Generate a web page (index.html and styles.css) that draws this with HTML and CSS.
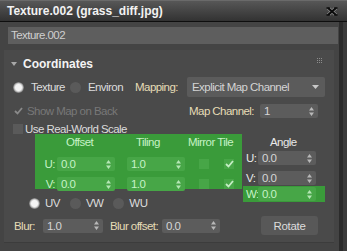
FILE: index.html
```html
<!DOCTYPE html>
<html lang="en">
<head>
  <meta charset="UTF-8">
  <title>Texture.002 (grass_diff.jpg)</title>
  <link rel="stylesheet" href="styles.css">
</head>
<body>
  <div class="titlebar">
    <span class="title">Texture.002 (grass_diff.jpg)</span>
    <svg class="close" width="12" height="9" viewBox="0 0 12 9">
      <path d="M2 1 L10 8 M10 1 L2 8" stroke="#8a8a8a" stroke-width="3.6"/>
      <path d="M2 1 L10 8 M10 1 L2 8" stroke="#0c0c0c" stroke-width="2.2"/>
      <path d="M0.5 1 H4 M8 1 H11.5 M0.5 8 H4 M8 8 H11.5" stroke="#0c0c0c" stroke-width="1.4"/>
    </svg>
  </div>
  <div class="body">
    <div class="main">
      <div class="namefield">Texture.002</div>
      <div class="rollout">
        <div class="head">
          <svg class="tri" width="6" height="4" viewBox="0 0 6 4"><path d="M0 0 H6 L3 4 Z" fill="#a8a8a8"/></svg>
          <span class="head-title">Coordinates</span>
          <svg class="grip" width="5" height="5" viewBox="0 0 5 5" fill="#8c8c8c">
            <rect x="0" y="0" width="1" height="1"/><rect x="2" y="0" width="1" height="1"/><rect x="4" y="0" width="1" height="1"/>
            <rect x="0" y="2" width="1" height="1"/><rect x="2" y="2" width="1" height="1"/><rect x="4" y="2" width="1" height="1"/>
            <rect x="0" y="4" width="1" height="1"/><rect x="2" y="4" width="1" height="1"/><rect x="4" y="4" width="1" height="1"/>
          </svg>
        </div>

        <div class="row row-map">
          <span class="radio on"></span><span class="opt">Texture</span>
          <span class="radio gap-l"></span><span class="opt">Environ</span>
          <span class="lbl mapping">Mapping:</span>
          <div class="dropdown">
            <span>Explicit Map Channel</span>
            <svg width="7" height="4" viewBox="0 0 7 4"><path d="M0 0 H7 L3.5 4 Z" fill="#c8c8c8"/></svg>
          </div>
        </div>

        <div class="row row-chan">
          <span class="check dim"><svg width="9" height="8" viewBox="0 0 9 8"><path d="M1 4 L3.5 6.5 L8 1" fill="none" stroke="#8a8a8a" stroke-width="1.8"/></svg></span>
          <span class="opt dim-text">Show Map on Back</span>
          <span class="lbl chan">Map Channel:</span>
          <div class="spin"><span>1</span><svg width="5" height="9" viewBox="0 0 5 9"><path d="M0 3.5 L2.5 0 L5 3.5 Z M0 5.5 L2.5 9 L5 5.5 Z" fill="#b8b8b8"/></svg></div>
        </div>

        <div class="row row-scale">
          <span class="check"></span>
          <span class="opt">Use Real-World Scale</span>
        </div>

        <div class="xform">
          <div class="left">
            <div class="green">
              <span></span><span class="gh">Offset</span><span></span><span class="gh">Tiling</span><span class="gh mt">Mirror Tile</span>
              <span class="gl">U:</span>
              <div class="spin g"><span>0.0</span><svg width="5" height="9" viewBox="0 0 5 9"><path d="M0 3.5 L2.5 0 L5 3.5 Z M0 5.5 L2.5 9 L5 5.5 Z" fill="#b5e6b5"/></svg></div>
              <span></span>
              <div class="spin g"><span>1.0</span><svg width="5" height="9" viewBox="0 0 5 9"><path d="M0 3.5 L2.5 0 L5 3.5 Z M0 5.5 L2.5 9 L5 5.5 Z" fill="#b5e6b5"/></svg></div>
              <span class="check g mirror"></span>
              <span class="check g tile"><svg width="9" height="8" viewBox="0 0 9 8"><path d="M1 4 L3.5 6.5 L8 1" fill="none" stroke="#c4eec4" stroke-width="1.8"/></svg></span>
              <span class="gl">V:</span>
              <div class="spin g"><span>0.0</span><svg width="5" height="9" viewBox="0 0 5 9"><path d="M0 3.5 L2.5 0 L5 3.5 Z M0 5.5 L2.5 9 L5 5.5 Z" fill="#b5e6b5"/></svg></div>
              <span></span>
              <div class="spin g"><span>1.0</span><svg width="5" height="9" viewBox="0 0 5 9"><path d="M0 3.5 L2.5 0 L5 3.5 Z M0 5.5 L2.5 9 L5 5.5 Z" fill="#b5e6b5"/></svg></div>
              <span class="check g mirror"></span>
              <span class="check g tile"><svg width="9" height="8" viewBox="0 0 9 8"><path d="M1 4 L3.5 6.5 L8 1" fill="none" stroke="#c4eec4" stroke-width="1.8"/></svg></span>
            </div>
            <div class="row row-axis">
              <span class="radio on"></span><span class="opt">UV</span>
              <span class="radio gap-a"></span><span class="opt">VW</span>
              <span class="radio gap-a"></span><span class="opt">WU</span>
            </div>
          </div>
          <div class="angle">
            <div class="ah">Angle</div>
            <div class="arow">
              <span class="al">U:</span>
              <div class="spin"><span>0.0</span><svg width="5" height="9" viewBox="0 0 5 9"><path d="M0 3.5 L2.5 0 L5 3.5 Z M0 5.5 L2.5 9 L5 5.5 Z" fill="#b8b8b8"/></svg></div>
            </div>
            <div class="arow">
              <span class="al">V:</span>
              <div class="spin"><span>0.0</span><svg width="5" height="9" viewBox="0 0 5 9"><path d="M0 3.5 L2.5 0 L5 3.5 Z M0 5.5 L2.5 9 L5 5.5 Z" fill="#b8b8b8"/></svg></div>
            </div>
            <div class="arow wrow">
              <span class="al gl">W:</span>
              <div class="spin g"><span>0.0</span><svg width="5" height="9" viewBox="0 0 5 9"><path d="M0 3.5 L2.5 0 L5 3.5 Z M0 5.5 L2.5 9 L5 5.5 Z" fill="#b5e6b5"/></svg></div>
            </div>
          </div>
        </div>

        <div class="row row-blur">
          <span class="lbl blur">Blur:</span>
          <div class="spin wide"><span>1.0</span><svg width="5" height="9" viewBox="0 0 5 9"><path d="M0 3.5 L2.5 0 L5 3.5 Z M0 5.5 L2.5 9 L5 5.5 Z" fill="#b8b8b8"/></svg></div>
          <span class="lbl boff">Blur offset:</span>
          <div class="spin"><span>0.0</span><svg width="5" height="9" viewBox="0 0 5 9"><path d="M0 3.5 L2.5 0 L5 3.5 Z M0 5.5 L2.5 9 L5 5.5 Z" fill="#b8b8b8"/></svg></div>
          <button class="rotate">Rotate</button>
        </div>
      </div>
    </div>
    <div class="edge"></div>
    <div class="outer"></div>
  </div>
</body>
</html>
```

FILE: styles.css
```css
body {
  margin: 0;
  width: 347px;
  height: 251px;
  overflow: hidden;
  background-color: #444444;
  font-family: "Liberation Sans", Arial, sans-serif;
  font-size: 11.5px;
  letter-spacing: -0.55px;
  color: #d6d6d6;
}
.titlebar {
  display: flex;
  align-items: center;
  justify-content: space-between;
  padding: 0 9px 0 7px;
  background: linear-gradient(#575757, #323232);
  border-top: 1px solid #6a6a6a;
  border-bottom: 1px solid #0e0e0e;
  box-sizing: border-box;
  height: 22px;
}
.title {
  font-size: 12px;
  font-weight: bold;
  letter-spacing: 0;
  color: #f2f2f2;
}
.close {
  margin-top: 1px;
}
.body {
  display: flex;
  height: 229px;
}
.main {
  width: 339px;
  padding-top: 5px;
}
.edge {
  width: 4px;
  background-color: #2b2b2b;
}
.outer {
  flex: 1;
  background-color: #3b3b3b;
}
.namefield {
  margin-left: 8px;
  width: 330px;
  height: 17px;
  line-height: 17px;
  padding-left: 3px;
  box-sizing: border-box;
  background-color: #5e5e5e;
  color: #cfcfcf;
}
.rollout {
  margin: 6px 0 0 4px;
  width: 330px;
  height: 193px;
  box-sizing: border-box;
  padding: 0 9px 0 9px;
  background-color: #4a4a4a;
  border-bottom: 1px solid #3c3c3c;
}
.head {
  height: 27px;
  display: flex;
  align-items: center;
}
.tri {
  margin: 0 0 0 -2px;
}
.head-title {
  margin-left: 6px;
  font-size: 12px;
  font-weight: bold;
  letter-spacing: 0;
  color: #f4f4f4;
}
.grip {
  margin: -6px 3px 0 auto;
}
.row {
  display: flex;
  align-items: center;
}
.row-map {
  height: 20px;
}
.radio {
  width: 11px;
  height: 11px;
  border-radius: 50%;
  background-color: #5a5a5a;
  flex: none;
}
.radio.on {
  background: radial-gradient(circle, #f4f4f4 0 3px, #cfcfcf 4px, #6a6a6a 5.5px);
}
.opt {
  margin-left: 7px;
  color: #dcdcdc;
}
.radio.gap-l {
  margin-left: 5px;
}
.lbl {
  color: #e6dcb6;
}
.mapping {
  margin-left: 12px;
}
.dropdown {
  margin-left: auto;
  width: 138px;
  height: 20px;
  box-sizing: border-box;
  padding: 0 6px 0 5px;
  display: flex;
  align-items: center;
  justify-content: space-between;
  background-color: #5b5b5b;
  border-radius: 2px;
  color: #d4d4d4;
}
.row-chan {
  height: 14px;
  margin-top: 7px;
}
.check {
  width: 10px;
  height: 10px;
  background-color: #5a5a5a;
  flex: none;
  display: flex;
  align-items: center;
  justify-content: center;
}
.check.dim {
  background-color: transparent;
}
.dim-text {
  margin-left: 4px;
  color: #787878;
}
.chan {
  margin-left: auto;
  margin-right: 6px;
}
.spin {
  width: 58px;
  height: 14px;
  box-sizing: border-box;
  padding: 0 4px 0 4px;
  display: flex;
  align-items: center;
  justify-content: space-between;
  background-color: #5c5c5c;
  border-radius: 2px;
  color: #d6d6d6;
}
.row-chan .spin {
  margin-right: 7px;
}
.row-scale {
  height: 11px;
  margin-top: 5px;
}
.row-scale .opt {
  margin-left: 2px;
}
.xform {
  display: flex;
  margin-left: 22px;
}
.green {
  width: 207px;
  height: 55px;
  box-sizing: border-box;
  padding-bottom: 4px;
  display: grid;
  grid-template-columns: 22px 58px 12px 58px 38px 19px;
  grid-template-rows: 17px 14px 14px;
  row-gap: 6px;
  align-items: center;
  background-color: #3a9b3a;
  color: #c6f2c6;
}
.gh {
  padding-left: 9px;
  margin-top: -1px;
}
.gh.mt {
  grid-column: 5 / 7;
  padding-left: 3px;
}
.gl {
  text-align: right;
  padding-right: 2px;
  color: #c6f2c6;
}
.spin.g {
  background-color: #47a647;
  color: #c6f2c6;
}
.check.g {
  background-color: #47a647;
}
.mirror {
  justify-self: center;
}
.tile {
  margin-left: 1px;
}
.row-axis {
  height: 14px;
  margin: 7px 0 0 -6px;
}
.row-axis .opt {
  margin-left: 5px;
}
.radio.gap-a {
  margin-left: 10px;
}
.angle {
  margin-left: 1px;
  width: 83px;
}
.ah {
  height: 17px;
  line-height: 16px;
  padding-left: 27px;
  color: #e8e8e8;
}
.arow {
  display: flex;
  align-items: center;
  height: 14px;
  margin-bottom: 6px;
}
.al {
  width: 15px;
  padding-left: 3px;
  box-sizing: border-box;
  color: #e8e8e8;
}
.wrow {
  margin-top: -5px;
  height: 16px;
  background-color: #3a9b3a;
}
.wrow .al {
  text-align: left;
  color: #c6f2c6;
}
.row-blur {
  height: 19px;
  margin-top: 6px;
}
.blur {
  margin-left: 1px;
}
.spin.wide {
  width: 60px;
  margin-left: 8px;
}
.boff {
  margin-left: 7px;
  margin-right: 4px;
}
.rotate {
  margin-left: auto;
  margin-right: 7px;
  width: 57px;
  height: 19px;
  border: none;
  border-radius: 3px;
  background-color: #585858;
  color: #dcdcdc;
  font-family: "Liberation Sans", Arial, sans-serif;
  font-size: 11.5px;
  letter-spacing: -0.3px;
  padding: 0;
}
```
